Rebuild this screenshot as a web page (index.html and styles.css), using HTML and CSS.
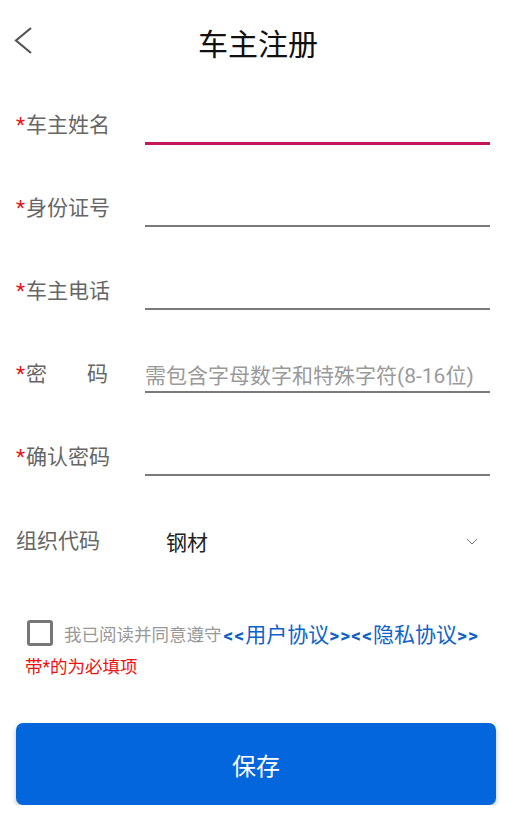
FILE: index.html
```html
<!DOCTYPE html>
<html lang="zh">
<head>
<meta charset="utf-8">
<title>车主注册</title>
<link rel="stylesheet" href="styles.css">
</head>
<body>
<header class="topbar">
  <span class="back">
    <svg width="20" height="28" viewBox="0 0 20 28"><polyline points="17,1 2,13.5 17,26" fill="none" stroke="#555" stroke-width="2.2"/></svg>
  </span>
  <h1 class="title">车主注册</h1>
</header>
<main class="form">
  <div class="row">
    <label class="label"><span class="req">*</span><span class="text">车主姓名</span></label>
    <div class="field focused"></div>
  </div>
  <div class="row">
    <label class="label"><span class="req">*</span><span class="text">身份证号</span></label>
    <div class="field"></div>
  </div>
  <div class="row">
    <label class="label"><span class="req">*</span><span class="text">车主电话</span></label>
    <div class="field"></div>
  </div>
  <div class="row">
    <label class="label"><span class="req">*</span><span class="text spread"><span>密</span><span>码</span></span></label>
    <div class="field"><span class="placeholder">需包含字母数字和特殊字符(8-16位)</span></div>
  </div>
  <div class="row">
    <label class="label"><span class="req">*</span><span class="text">确认密码</span></label>
    <div class="field"></div>
  </div>
  <div class="row org">
    <label class="label plain"><span class="text">组织代码</span></label>
    <div class="select"><span class="value">钢材</span>
      <svg class="caret" width="12" height="7" viewBox="0 0 12 7"><polyline points="1,1 6,6 11,1" fill="none" stroke="#777" stroke-width="1"/></svg>
    </div>
  </div>
  <div class="agree">
    <span class="checkbox"></span>
    <span class="agree-text">我已阅读并同意遵守</span><span class="link"><b>&lt;&lt;</b>用户协议<b>&gt;&gt;&lt;&lt;</b>隐私协议<b>&gt;&gt;</b></span>
  </div>
  <p class="note">带*的为必填项</p>
  <button class="save">保存</button>
</main>
</body>
</html>
```
FILE: styles.css
```css
* { box-sizing: border-box; }
body {
  margin: 0;
  background: #fff;
  font-family: Roboto, "Noto Sans CJK SC", sans-serif;
  width: 516px;
}
.topbar {
  position: relative;
  height: 84px;
  display: flex;
  align-items: center;
  justify-content: center;
}
.back {
  position: absolute;
  left: 14px;
  top: 27px;
  width: 20px;
  height: 28px;
}
.back svg { display: block; }
.title {
  margin: 0;
  font-size: 30px;
  font-weight: 400;
  color: #111;
}
.form {
  padding: 24px 0 0 0;
}
.row {
  display: flex;
  align-items: center;
  height: 36px;
  margin: 0 26px 47px 16px;
}
.label {
  width: 129px;
  display: flex;
  align-items: center;
  font-size: 21px;
  color: #666;
  line-height: 1;
  margin-top: -1px;
}
.row.org .label { margin-top: 1px; }
.req {
  color: #e5141b;
  width: 10px;
  font-size: 21px;
}
.text { display: inline-block; }
.text.spread {
  display: flex;
  justify-content: space-between;
  width: 82px;
}
.field {
  flex: 1;
  height: 36px;
  border-bottom: 2px solid #7a7a7a;
  display: flex;
  align-items: center;
}
.field.focused {
  border-bottom: 3px solid #c2185b;
  height: 37px;
  margin-top: 1px;
}
.placeholder {
  font-size: 21px;
  color: #9a9a9a;
  white-space: nowrap;
}
.select {
  flex: 1;
  height: 36px;
  display: flex;
  align-items: center;
  justify-content: space-between;
  padding: 0 12px 0 21px;
}
.value {
  font-size: 21px;
  color: #222;
}
.caret { display: block; }
.agree {
  display: flex;
  align-items: center;
  margin: 61px 0 0 27px;
  height: 26px;
}
.checkbox {
  width: 26px;
  height: 26px;
  border: 3px solid #777;
  border-radius: 3px;
  margin-right: 11px;
  flex: none;
}
.agree-text {
  font-size: 17.5px;
  color: #999;
  white-space: nowrap;
}
.link {
  font-size: 21px;
  font-weight: 400;
  color: #0f62c8;
  white-space: nowrap;
  margin-left: 2px;
}
.link b {
  font-weight: 700;
  font-size: 19px;
  letter-spacing: 1.2px;
}
.note {
  margin: 11px 0 0 25px;
  font-size: 17.5px;
  color: #ee1111;
  line-height: 1.2;
}
.save {
  display: block;
  width: 480px;
  height: 82px;
  margin: 45px 0 0 16px;
  border: none;
  border-radius: 7px;
  background: #0466dc;
  color: #fff;
  font-family: Roboto, "Noto Sans CJK SC", sans-serif;
  font-size: 24px;
  box-shadow: 0 3px 5px rgba(0,0,0,0.25);
}
```
